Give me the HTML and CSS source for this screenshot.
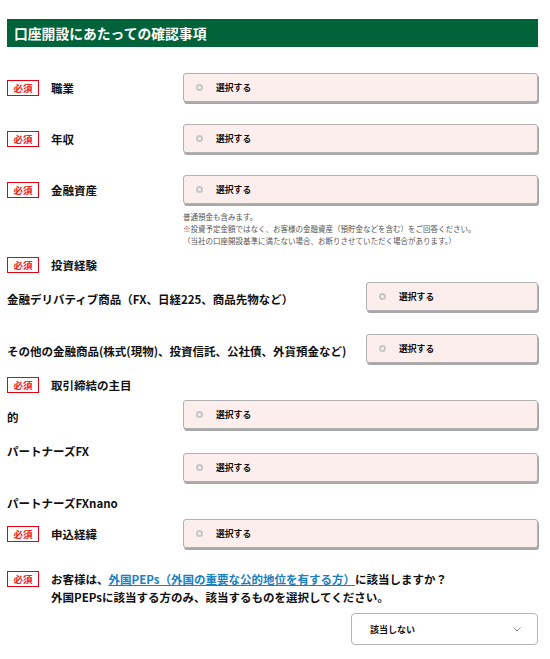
FILE: index.html
```html
<!DOCTYPE html>
<html lang="ja">
<head>
<meta charset="utf-8">
<link rel="stylesheet" href="styles.css">
</head>
<body>
<div class="page">
  <h2 class="heading">口座開設にあたっての確認事項</h2>

  <div class="row r1">
    <div class="left"><span class="badge">必須</span><span class="label">職業</span></div>
    <div class="choice"><span class="radio"></span><span class="ctext">選択する</span></div>
  </div>

  <div class="row r2">
    <div class="left"><span class="badge">必須</span><span class="label">年収</span></div>
    <div class="choice"><span class="radio"></span><span class="ctext">選択する</span></div>
  </div>

  <div class="row r2">
    <div class="left"><span class="badge">必須</span><span class="label">金融資産</span></div>
    <div class="choice"><span class="radio"></span><span class="ctext">選択する</span></div>
  </div>
  <div class="note">
    <p>普通預金も含みます。</p>
    <p>※投資予定金額ではなく、お客様の金融資産（預貯金などを含む）をご回答ください。</p>
    <p>（当社の口座開設基準に満たない場合、お断りさせていただく場合があります。）</p>
  </div>

  <div class="row r-exp">
    <div class="left"><span class="badge">必須</span><span class="label">投資経験</span></div>
  </div>

  <div class="row r-deriv">
    <div class="wide-label">金融デリバティブ商品（FX、日経225、商品先物など）</div>
    <div class="choice narrow"><span class="radio"></span><span class="ctext">選択する</span></div>
  </div>

  <div class="row r-other">
    <div class="wide-label">その他の金融商品(株式(現物)、投資信託、公社債、外貨預金など)</div>
    <div class="choice narrow"><span class="radio"></span><span class="ctext">選択する</span></div>
  </div>

  <div class="row r-purpose">
    <div class="left"><span class="badge">必須</span><span class="label">取引締結の主目</span></div>
  </div>

  <div class="row r-mato">
    <div class="left"><span class="plain">的</span></div>
    <div class="choice"><span class="radio"></span><span class="ctext">選択する</span></div>
  </div>

  <div class="row r-fx">
    <div class="left"><span class="plain">パートナーズFX</span></div>
    <div class="choice fx-choice"><span class="radio"></span><span class="ctext">選択する</span></div>
  </div>

  <div class="row r-nano">
    <div class="left"><span class="plain">パートナーズFXnano</span></div>
  </div>

  <div class="row r-apply">
    <div class="left"><span class="badge">必須</span><span class="label">申込経緯</span></div>
    <div class="choice"><span class="radio"></span><span class="ctext">選択する</span></div>
  </div>

  <div class="row r-peps">
    <span class="badge">必須</span>
    <div class="peps-text">
      <p>お客様は、<a class="link" href="#">外国PEPs（外国の重要な公的地位を有する方）</a>に該当しますか？</p>
      <p>外国PEPsに該当する方のみ、該当するものを選択してください。</p>
    </div>
  </div>

  <div class="select">
    <span class="stext">該当しない</span>
    <svg class="chev" width="8" height="5" viewBox="0 0 8 5"><path d="M0.5 0.5 L4 4 L7.5 0.5" fill="none" stroke="#888" stroke-width="1"/></svg>
  </div>
</div>
</body>
</html>
```

FILE: styles.css
```css
* { box-sizing: border-box; }
html, body { margin: 0; padding: 0; background: #fff; }
body {
  font-family: "Noto Sans CJK JP", "Noto Sans", sans-serif;
  color: #111;
}
.page {
  width: 550px;
  padding: 19px 12px 0 7px;
}
p { margin: 0; }

.heading {
  margin: 0;
  height: 28px;
  line-height: 28px;
  background: #00633a;
  color: #fff;
  font-size: 13.8px;
  font-weight: 700;
  padding-left: 7px;
  letter-spacing: 0;
}

.row {
  display: flex;
  align-items: center;
}
.left {
  width: 176px;
  flex: none;
  display: flex;
  align-items: center;
}
.badge {
  flex: none;
  width: 32px;
  height: 16px;
  border: 1px solid #e60012;
  color: #f02020;
  font-size: 9.5px;
  font-weight: 700;
  line-height: 14px;
  text-align: center;
}
.label {
  margin-left: 12px;
  font-size: 11.5px;
  font-weight: 700;
  line-height: 16px;
}
.plain {
  font-size: 11.5px;
  font-weight: 700;
  line-height: 16px;
}
.choice {
  flex: 1;
  height: 29px;
  background: #fdeeee;
  border: 1px solid #b0b0b0;
  border-radius: 3px;
  box-shadow: 1px 2px 0 #a8a8a8;
  display: flex;
  align-items: center;
  padding-left: 12px;
}
.choice.narrow {
  flex: none;
  width: 172px;
}
.radio {
  width: 7px;
  height: 7px;
  border-radius: 50%;
  border: 2px solid #c6c6c6;
  background: #f4f4f4;
  flex: none;
}
.ctext {
  margin-left: 13px;
  font-size: 8.8px;
  font-weight: 700;
  color: #111;
}

.r1 { margin-top: 26px; }
.r2 { margin-top: 22px; }

.note {
  margin-top: 7px;
  margin-left: 176px;
  font-size: 7.5px;
  line-height: 12px;
  color: #555;
}

.r-exp { margin-top: 10px; }
.r-deriv { margin-top: 9px; }
.r-other { margin-top: 23px; }
.wide-label {
  flex: 1;
  font-size: 11.5px;
  font-weight: 700;
  line-height: 16px;
  padding-top: 5px;
}
.r-purpose { margin-top: 14px; }
.r-mato { margin-top: 7px; }
.r-mato .left { padding-top: 5px; }
.r-fx { margin-top: 14px; align-items: flex-start; }
.fx-choice { margin-top: 10px; }
.r-nano { margin-top: 13px; }
.r-apply { margin-top: 8px; }

.r-peps {
  margin-top: 22px;
  align-items: flex-start;
}
.r-peps .badge { margin-top: 1px; }
.peps-text {
  margin-left: 12px;
  font-size: 11.5px;
  font-weight: 700;
  line-height: 18px;
}
.link {
  color: #1a80c2;
  text-decoration: underline;
}

.select {
  margin-top: 7px;
  margin-left: 344px;
  width: 187px;
  height: 32px;
  border: 1px solid #b5b5b5;
  border-radius: 4px;
  background: #fff;
  display: flex;
  align-items: center;
  justify-content: space-between;
  padding: 0 16px 0 18px;
}
.stext {
  font-size: 9px;
  font-weight: 700;
}
.chev { display: block; }
```
